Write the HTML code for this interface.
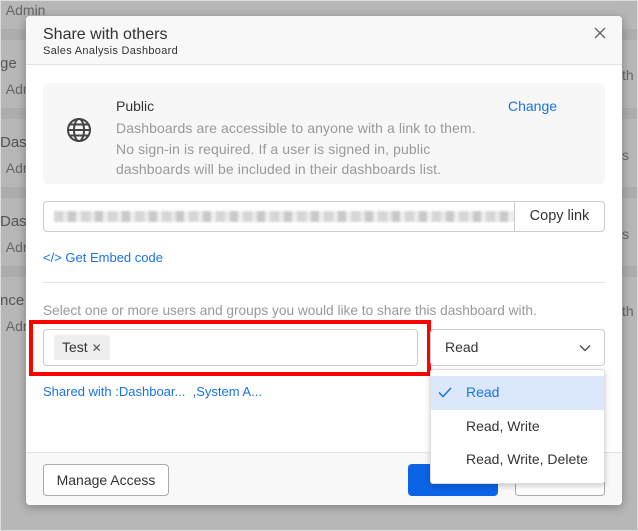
<!DOCTYPE html>
<html><head><style>
*{box-sizing:border-box;margin:0;padding:0}
body{width:638px;height:531px;overflow:hidden;background:#b7b7b7;font-family:"Liberation Sans",sans-serif;position:relative}
.bg{position:absolute;left:0;color:#666;font-size:14px}
.band{position:absolute;left:0;right:0;height:11px;background:#adadad}
.dlg{position:absolute;left:26px;top:16px;width:596px;height:489px;background:#fff;border-radius:4px;box-shadow:0 2px 10px rgba(0,0,0,.3);overflow:visible}
.hd{height:49px;background:#f8f8f8;border-bottom:1px solid #e4e4e4;border-radius:4px 4px 0 0;padding:10px 17px}
.hd h1{font-size:16px;font-weight:normal;color:#333;line-height:18px}
.hd .sub{font-size:11px;color:#333;letter-spacing:.3px;margin-top:1px}
.x{position:absolute;right:15px;top:10px}
.pub{position:absolute;left:17px;top:67px;width:562px;height:101px;background:#f7f7f7;border-radius:6px}
.pub .t{position:absolute;left:73px;top:15px;font-size:14px;color:#333}
.pub .d{position:absolute;left:73px;top:35px;font-size:14px;color:#999;line-height:20.5px;letter-spacing:.1px}
.pub .c{position:absolute;left:465px;top:15px;font-size:14px;color:#1a73e8}
.link{position:absolute;left:17px;top:185px;width:562px;height:31px;border:1px solid #ccc;border-radius:4px}
.copy{position:absolute;right:0;top:0;width:90px;height:29px;border-left:1px solid #ccc;font-size:14.5px;color:#333;text-align:center;line-height:29px}
.blur{position:absolute;left:10px;top:9px;width:460px;height:11px;background:repeating-linear-gradient(90deg,#d6d6d6 0 9px,#e9e9e9 9px 14px,#c9c9c9 14px 22px,#eee 22px 27px);filter:blur(1px)}
.emb{position:absolute;left:17px;top:234px;font-size:13px;color:#1a73e8}
.hr{position:absolute;left:17px;right:17px;top:266px;border-top:1px solid #e4e4e4}
.sel{position:absolute;left:17px;top:287px;font-size:13.7px;color:#999}
.red{position:absolute;left:3px;top:304px;width:402px;height:56px;border:4px solid #f00}
.inp{position:absolute;left:17px;top:313px;width:375px;height:37px;border:1px solid #ccc;border-radius:4px}
.tag{position:absolute;left:10px;top:5px;height:25px;background:#eee;border-radius:2px;font-size:14px;color:#333;padding:0 8px;line-height:25px}
.dd{position:absolute;left:404px;top:313px;width:175px;height:37px;border:1px solid #ccc;border-radius:4px;font-size:14px;color:#333;padding:0 14px;line-height:35px}
.shr{position:absolute;left:17px;top:368px;font-size:13px;color:#1a73e8}
.ft{position:absolute;left:0;right:0;bottom:0;height:53px;background:#f8f8f8;border-top:1px solid #e4e4e4;border-radius:0 0 4px 4px}
.ma{position:absolute;left:17px;top:11px;width:126px;height:32px;border:1px solid #aaa;border-radius:4px;background:#fff;font-size:14px;color:#333;text-align:center;line-height:30px}
.blue{position:absolute;left:382px;top:11px;width:90px;height:32px;background:#0b63e5;border-radius:4px}
.cancel{position:absolute;left:489px;top:11px;width:90px;height:32px;border:1px solid #aaa;border-radius:4px;background:#fff}
.menu{position:absolute;left:404px;top:353px;width:175px;height:115px;background:#fff;border:1px solid #ddd;border-radius:3px;box-shadow:0 2px 6px rgba(0,0,0,.2);padding-top:6px}
.mi{height:33.5px;line-height:33px;padding-left:35px;font-size:14px;color:#333;position:relative}
.mi.on{background:#dbe8fb;color:#1a73e8}
.frame{position:absolute;inset:0;border:1px solid #ddd;pointer-events:none}
</style></head><body>
<div class="bg" style="top:2px;left:-2px">· Admin</div>
<div class="band" style="top:29px"></div>
<div class="bg" style="top:55px;font-size:15px;color:#555">ge</div>
<div class="bg" style="top:81px;left:-2px">· Adm</div>
<div class="band" style="top:108px"></div>
<div class="bg" style="top:134px;font-size:15px;color:#555">Das</div>
<div class="bg" style="top:160px;left:-2px">· Adm</div>
<div class="band" style="top:187px"></div>
<div class="bg" style="top:213px;font-size:15px;color:#555">Das</div>
<div class="bg" style="top:239px;left:-2px">· Adm</div>
<div class="band" style="top:266px"></div>
<div class="bg" style="top:292px;font-size:15px;color:#555">nce</div>
<div class="bg" style="top:318px;left:-2px">· Adm</div>
<div class="bg" style="top:67px;left:622px">th</div>
<div class="bg" style="top:303px;left:622px">th</div>
<div class="bg" style="top:147px;left:622px">s</div>
<div class="bg" style="top:226px;left:622px">s</div>

<div class="dlg">
 <div class="hd"><h1>Share with others</h1><div class="sub">Sales Analysis Dashboard</div></div>
 <svg class="x" width="14" height="14" viewBox="0 0 14 14"><path d="M2 2L12 12M12 2L2 12" stroke="#666" stroke-width="1.4"/></svg>
 <div class="pub">
  <svg style="position:absolute;left:23px;top:34px" width="26" height="26" viewBox="0 0 26 26" fill="none" stroke="#444" stroke-width="2"><circle cx="13" cy="13" r="11"/><ellipse cx="13" cy="13" rx="5" ry="11"/><line x1="2" y1="13" x2="24" y2="13"/><line x1="4" y1="7.5" x2="22" y2="7.5"/><line x1="4" y1="18.5" x2="22" y2="18.5"/></svg>
  <div class="t">Public</div>
  <div class="d">Dashboards are accessible to anyone with a link to them.<br>No sign-in is required. If a user is signed in, public<br>dashboards will be included in their dashboards list.</div>
  <div class="c">Change</div>
 </div>
 <div class="link"><div class="blur"></div><div class="copy">Copy link</div></div>
 <div class="emb">&lt;/&gt; Get Embed code</div>
 <div class="hr"></div>
 <div class="sel">Select one or more users and groups you would like to share this dashboard with.</div>
 <div class="red"></div>
 <div class="inp"><div class="tag">Test <span style="color:#555;font-size:12px">✕</span></div></div>
 <div class="dd">Read<svg style="position:absolute;right:13px;top:14px" width="12" height="8" viewBox="0 0 12 8"><path d="M1 1.5L6 6.5L11 1.5" stroke="#444" stroke-width="1.3" fill="none"/></svg></div>
 <div class="shr">Shared with :Dashboar...&nbsp; ,System A...</div>
 <div class="ft"><div class="ma">Manage Access</div><div class="blue"></div><div class="cancel"></div></div>
 <div class="menu">
  <div class="mi on"><svg style="position:absolute;left:7px;top:11px" width="14" height="11" viewBox="0 0 14 11"><path d="M1 5.5L5 9.5L13 1" stroke="#1a73e8" stroke-width="1.5" fill="none"/></svg>Read</div>
  <div class="mi">Read, Write</div>
  <div class="mi">Read, Write, Delete</div>
 </div>
</div>
<div class="frame"></div>
</body></html>
